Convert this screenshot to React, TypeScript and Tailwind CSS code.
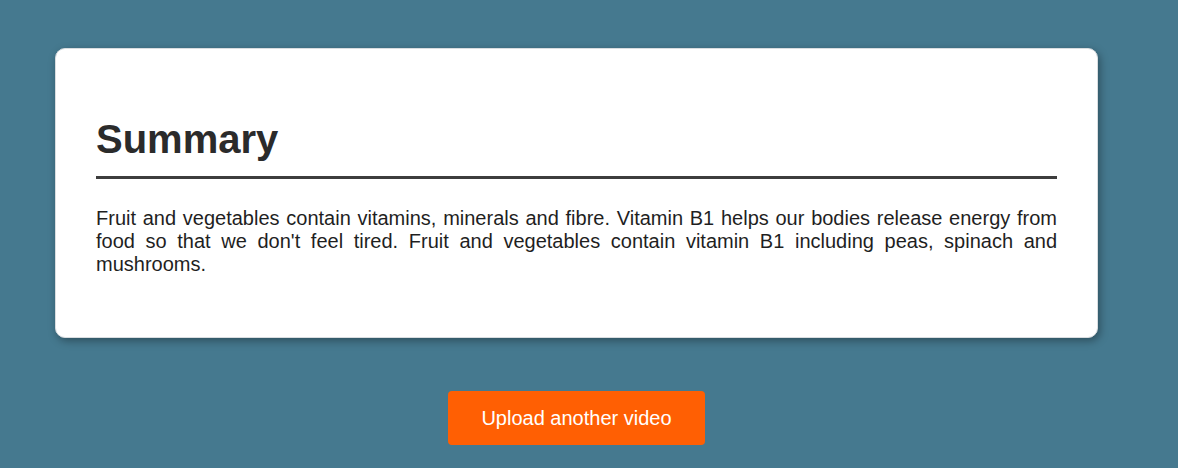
import React from "react";

const summary =
  "Fruit and vegetables contain vitamins, minerals and fibre. Vitamin B1 helps our bodies release energy from food so that we don't feel tired. Fruit and vegetables contain vitamin B1 including peas, spinach and mushrooms.";

export default function App() {
  return (
    <div className="min-h-[468px] w-full bg-[#45798f] pt-[48px] pl-[55px] font-['Liberation_Sans',Arial,sans-serif]">
      <div className="flex w-[1043px] flex-col items-center">
        <section className="w-full rounded-[10px] border border-[#d9dde0] bg-white px-[40px] pt-[67px] pb-[61px] shadow-[2px_3px_8px_rgba(0,0,0,0.35)]">
          <h2 className="border-b-[3px] border-[#3d3d3d] pb-[14px] text-[40px] font-bold leading-[46px] text-[#2b2b2b]">
            Summary
          </h2>
          <p className="mt-[28px] text-justify text-[20px] leading-[23px] text-[#1f1f1f]">
            {summary}
          </p>
        </section>
        <button className="mt-[53px] h-[54px] rounded-[4px] bg-[#ff5f03] px-[33px] text-[20px] leading-[23px] text-white">
          Upload another video
        </button>
      </div>
    </div>
  );
}
